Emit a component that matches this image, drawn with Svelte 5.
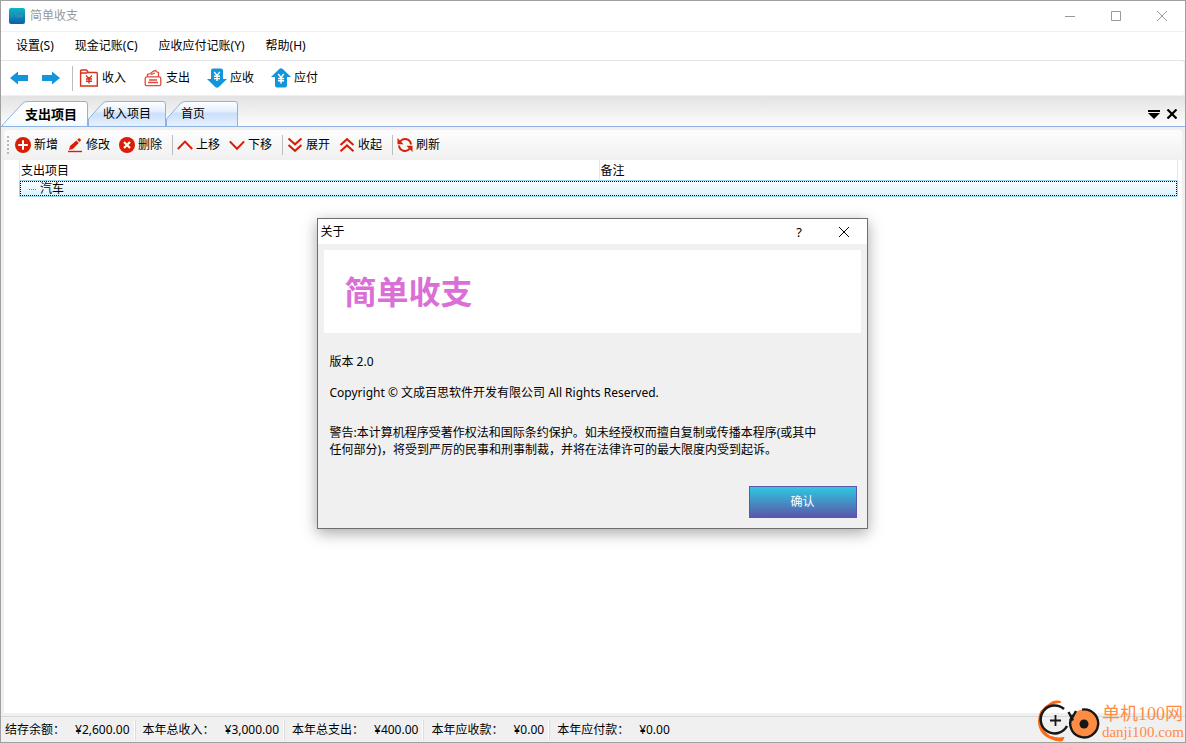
<script>
  const menus = ['设置(S)', '现金记账(C)', '应收应付记账(Y)', '帮助(H)'];

  const entries = [
    { icon: 'income', text: '收入' },
    { icon: 'expense', text: '支出' },
    { icon: 'receivable', text: '应收' },
    { icon: 'payable', text: '应付' },
  ];

  const tabs = [
    { text: '支出项目', width: 86, slant: 24 },
    { text: '收入项目', width: 78, slant: 18 },
    { text: '首页', width: 72, slant: 18 },
  ];

  const groups = [
    [
      { icon: 'add', text: '新增' },
      { icon: 'edit', text: '修改' },
      { icon: 'remove', text: '删除' },
    ],
    [
      { icon: 'up', text: '上移' },
      { icon: 'down', text: '下移' },
    ],
    [
      { icon: 'expand', text: '展开' },
      { icon: 'collapse', text: '收起' },
    ],
    [{ icon: 'refresh', text: '刷新' }],
  ];

  const totals = [
    { label: '结存余额：', value: '¥2,600.00' },
    { label: '本年总收入：', value: '¥3,000.00' },
    { label: '本年总支出：', value: '¥400.00' },
    { label: '本年应收款：', value: '¥0.00' },
    { label: '本年应付款：', value: '¥0.00' },
  ];

  let activeTab = $state(0);
  let aboutOpen = $state(true);

  // slanted left side, rounded top right corner
  const tabPath = (w, s) =>
    `M.5 25 V${s > 20 ? 24 : 18} L${s - 4} 3 Q${s - 2} .5 ${s + 2} .5 H${w - 3} Q${w - 0.5} .5 ${w - 0.5} 3 V25`;
</script>

{#snippet toolIcon(name)}
  <svg class="tool-icon" viewBox="0 0 16 16" aria-hidden="true">
    {#if name === 'add'}
      <circle cx="8" cy="8" r="8" fill="#d81e06" />
      <path d="M8 3.2v9.6M3.2 8h9.6" stroke="#fff" stroke-width="2" />
    {:else if name === 'edit'}
      <path d="M2 13l1-4 6.400-5.600 2.400 2.600-6 6zM10.200 2.800l1.300-1.200q.8-.6 1.600.2l.6.600q.6.800 0 1.400l-1.300 1.200z" fill="#d81e06" />
      <path d="M1 14.500h14" stroke="#d81e06" stroke-width="1.400" />
    {:else if name === 'remove'}
      <circle cx="8" cy="8" r="8" fill="#d81e06" />
      <path d="M5 5l6 6M11 5l-6 6" stroke="#fff" stroke-width="2.200" />
    {:else if name === 'up'}
      <path d="M.8 12L8 4.600l7.200 7.400" class="line" />
    {:else if name === 'down'}
      <path d="M.8 4.400L8 11.800l7.200-7.400" class="line" />
    {:else if name === 'expand'}
      <path d="M1.500 1.500L8 7.300l6.500-5.800M1.500 8L8 13.800 14.500 8" class="line" />
    {:else if name === 'collapse'}
      <path d="M1.500 8L8 2.200 14.500 8M1.500 14.200L8 8.400l6.500 5.800" class="line" />
    {:else if name === 'refresh'}
      <path d="M3.200 4.500A6 6 0 0 1 14 7.500M12.800 11.500A6 6 0 0 1 2 8.500" class="line" />
      <path d="M.5 1v6.200h6zM15.500 15V8.800h-6z" fill="#d81e06" />
    {/if}
  </svg>
{/snippet}

{#snippet entryIcon(name)}
  <svg class="entry-icon" viewBox="0 0 20 20" aria-hidden="true">
    {#if name === 'income'}
      <path d="M1.600 18V3q0-1 1-1h4.800l2 2.500h7.900q1 0 1 1V18zM1.600 5h7" fill="none" stroke="#d9301c" stroke-width="1.400" />
      <path d="M7 7.500l3 3 3-3M10 10.500V15.500M7 11h6M7 13.200h6" fill="none" stroke="#d9301c" stroke-width="1.400" />
    {:else if name === 'expense'}
      <path d="M3.800 8.800h12.400q1.600 0 1.600 1.600v5.700q0 1.600-1.600 1.600H3.800q-1.600 0-1.600-1.600v-5.700q0-1.600 1.600-1.600zM4.500 8.500V6.500l3-1 3-2.500 2-.5 1.500 1.500 1.500.5v4M8 6.500l4-1.500M6 12h8M5 14.500h10" fill="none" stroke="#e04a3a" stroke-width="1.300" />
    {:else if name === 'receivable'}
      <path d="M6 .5h8q2 0 2 2V11h4l-8.200 8q-1.800 1.400-3.600 0L0 11h4V2.500q0-2 2-2z" fill="#1296db" />
      <path d="M7.200 4L10 7.500 12.800 4M10 7.500V13M7 8.300h6M7 10.600h6" fill="none" stroke="#fff" stroke-width="1.400" />
    {:else}
      <path d="M6 19.500h8q2 0 2-2V9h4l-8.200-8Q10 -.4 8.200 1L0 9h4v8.500q0 2 2 2z" fill="#1296db" />
      <path d="M7.200 6L10 9.500 12.800 6M10 9.500V15.500M7 10.500h6M7 12.800h6" fill="none" stroke="#fff" stroke-width="1.400" />
    {/if}
  </svg>
{/snippet}

<div class="window">
  <header class="title-bar">
    <svg class="app-icon" viewBox="0 0 16 16" aria-hidden="true">
      <defs>
        <linearGradient id="app-fill" x1="0" y1="0" x2="0" y2="1">
          <stop offset="0" stop-color="#13b5c4" />
          <stop offset="1" stop-color="#0c5fa8" />
        </linearGradient>
      </defs>
      <rect width="16" height="16" rx="2" fill="url(#app-fill)" />
      <path d="M3 6v4M5 6h2v4M9.500 6v4M11 8h3M12 6v4" fill="none" stroke="#3f9fc4" stroke-width="1" opacity=".7" />
    </svg>
    <span class="title">简单收支</span>
    <button class="control" aria-label="最小化">
      <svg viewBox="0 0 12 12"><path d="M1 6.500h10" /></svg>
    </button>
    <button class="control" aria-label="最大化">
      <svg viewBox="0 0 12 12"><path d="M1.500 1.500h9v9h-9z" /></svg>
    </button>
    <button class="control" aria-label="关闭">
      <svg viewBox="0 0 12 12"><path d="M1 1l10 10M11 1L1 11" /></svg>
    </button>
  </header>

  <nav class="menu-bar">
    {#each menus as menu}
      <button>{menu}</button>
    {/each}
  </nav>

  <div class="main-tools">
    <button class="arrow" aria-label="后退">
      <svg viewBox="0 0 18 14"><path d="M0 7l8-6.500V4h10v6H8v3.500z" fill="#1296db" /></svg>
    </button>
    <button class="arrow" aria-label="前进">
      <svg viewBox="0 0 18 14"><path d="M18 7l-8-6.500V4H0v6h10v3.500z" fill="#1296db" /></svg>
    </button>
    <span class="divider"></span>
    {#each entries as entry}
      <button class="entry">
        {@render entryIcon(entry.icon)}
        {entry.text}
      </button>
    {/each}
  </div>

  <div class="tab-bar">
    <svg width="0" height="0" class="defs" aria-hidden="true">
      <defs>
        <linearGradient id="tab-on" x1="0" y1="0" x2="0" y2="1">
          <stop offset="0" stop-color="#fff" />
          <stop offset="1" stop-color="#f5fbfd" />
        </linearGradient>
        <linearGradient id="tab-off" x1="0" y1="0" x2="0" y2="1">
          <stop offset="0" stop-color="#fff" />
          <stop offset=".4" stop-color="#e4effd" />
          <stop offset=".5" stop-color="#c9dffb" />
          <stop offset="1" stop-color="#e8f2fe" />
        </linearGradient>
      </defs>
    </svg>
    <div class="tabs" role="tablist">
      {#each tabs as tab, i}
        <button
          class="tab"
          class:active={i === activeTab}
          role="tab"
          aria-selected={i === activeTab}
          style="width: {tab.width}px"
          onclick={() => (activeTab = i)}
        >
          <svg class="tab-shape" viewBox="0 0 {tab.width} 25" aria-hidden="true">
            <path
              d={tabPath(tab.width, tab.slant)}
              fill={i === activeTab ? 'url(#tab-on)' : 'url(#tab-off)'}
              stroke="#8db2e3"
            />
          </svg>
          <span>{tab.text}</span>
        </button>
      {/each}
    </div>
    <button class="tab-action" aria-label="标签列表">
      <svg viewBox="0 0 12 10"><path d="M0 1h12v2H0zM0 4h12L6 10z" /></svg>
    </button>
    <button class="tab-action" aria-label="关闭标签">
      <svg viewBox="0 0 12 10"><path d="M1.500 .5l9 9M10.500 .5l-9 9" stroke="#000" stroke-width="2.200" /></svg>
    </button>
  </div>

  <main class="page">
    <div class="page-tools">
      <span class="grip"></span>
      {#each groups as group, i}
        {#if i > 0}
          <span class="separator"></span>
        {/if}
        <div class="group">
          {#each group as tool}
            <button class="tool">
              {@render toolIcon(tool.icon)}
              {tool.text}
            </button>
          {/each}
        </div>
      {/each}
    </div>

    <div class="grid">
      <table>
        <thead>
          <tr><th>支出项目</th><th>备注</th></tr>
        </thead>
        <tbody>
          <tr class="selected"><td><span class="branch"></span>汽车</td><td></td></tr>
        </tbody>
      </table>
    </div>
  </main>

  <footer class="status-bar">
    {#each totals as total}
      <div class="total">
        <span>{total.label}</span>
        <span>{total.value}</span>
      </div>
    {/each}
  </footer>

  <div class="site-mark">
    <svg viewBox="0 0 64 44" aria-hidden="true">
      <path d="M25 2.500Q20 0 14 4 2 10 2 22q0 14 15 19 6 2 9.500 1l2-4q-7 2-14-1Q5 31 5 22 5 12 14 6q5-3 11-2z" fill="#ff6a13" />
      <path d="M25 3.500Q20 0 14 4l-3 4q7-4 14-4.500zM16 40q5 3 10.500 2l2-4q-7 2-13-1z" fill="#ff6a13" />
      <path d="M28 10A14 14 0 1 0 31 27" fill="none" stroke="#171717" stroke-width="2.500" />
      <path d="M19.500 16v11M14 21.500h11" stroke="#171717" stroke-width="1.800" />
      <circle cx="48" cy="24.500" r="14" fill="#ff8c45" />
      <path d="M46 10.600A14 14 0 1 1 37 16M32.500 13l4.500 8.500M40 12l-5 9" fill="none" stroke="#171717" stroke-width="2.400" />
      <circle cx="48" cy="25" r="4.500" fill="#171717" />
    </svg>
    <div>
      <span class="site-name">单机100网</span>
      <span class="site-url">danji100.com</span>
    </div>
  </div>

  {#if aboutOpen}
    <div class="overlay">
      <div class="dialog" role="dialog" aria-labelledby="about-title">
        <div class="dialog-bar">
          <span id="about-title">关于</span>
          <button class="help" aria-label="帮助">?</button>
          <button class="close" aria-label="关闭对话框" onclick={() => (aboutOpen = false)}>
            <svg viewBox="0 0 12 12"><path d="M1 1l10 10M11 1L1 11" /></svg>
          </button>
        </div>
        <h1>简单收支</h1>
        <div class="about">
          <p>版本 2.0</p>
          <p>Copyright © 文成百思软件开发有限公司 All Rights Reserved.</p>
          <p class="warning">
            警告:本计算机程序受著作权法和国际条约保护。如未经授权而擅自复制或传播本程序(或其中<br />任何部分)，将受到严厉的民事和刑事制裁，并将在法律许可的最大限度内受到起诉。
          </p>
        </div>
        <button class="confirm" onclick={() => (aboutOpen = false)}>确认</button>
      </div>
    </div>
  {/if}
</div>

<style>
  :global(body) {
    margin: 0;
  }
  .window {
    background: #f0f0f0;
    border: 1px solid #a0a0a0;
    box-sizing: border-box;
    color: #000;
    display: flex;
    flex-direction: column;
    font-family: 'Noto Sans', 'Noto Sans CJK SC', sans-serif;
    font-size: 12px;
    line-height: 16px;
    min-height: 100vh;
    position: relative;
    white-space: nowrap;
  }
  button {
    align-items: center;
    background: none;
    border: 0;
    color: inherit;
    display: flex;
    font: inherit;
    padding: 0;
  }
  svg {
    display: block;
    flex: none;
  }

  .title-bar {
    align-items: center;
    background: #fff;
    border-bottom: 1px solid #f0f0f0;
    display: flex;
    height: 30px;
  }
  .app-icon {
    height: 16px;
    margin: 0 5px 0 8px;
    width: 16px;
  }
  .title {
    color: #999;
    flex: 1;
  }
  .control {
    height: 30px;
    justify-content: center;
    width: 46px;
  }
  .control svg,
  .close svg {
    fill: none;
    height: 12px;
    stroke: #999;
    width: 12px;
  }

  .menu-bar {
    background: #fff;
    border-bottom: 1px solid #e5e5e5;
    display: flex;
    gap: 1px;
    height: 28px;
    padding-left: 5px;
  }
  .menu-bar button {
    padding: 0 10px;
  }

  .main-tools {
    align-items: center;
    background: #fff;
    border-radius: 0 3px 3px 0;
    display: flex;
    height: 34px;
    line-height: 18px;
    margin-right: 1px;
    padding-left: 9px;
  }
  .arrow {
    margin-right: 14px;
  }
  .arrow svg {
    height: 14px;
    width: 18px;
  }
  .divider {
    background: #bdbdbd;
    height: 25px;
    margin: 0 6px 0 -2px;
    width: 1px;
  }
  .entry {
    gap: 3px;
    margin-right: 17px;
  }
  .entry-icon {
    height: 20px;
    width: 20px;
  }

  .tab-bar {
    align-items: center;
    background: linear-gradient(#e3e3e3, #fcfcfc);
    border-bottom: 1px solid #8db2e3;
    border-top: 1px solid #f0f0f0;
    display: flex;
    height: 30px;
    padding-right: 7px;
  }
  .defs {
    position: absolute;
  }
  .tabs {
    align-self: flex-end;
    display: flex;
    flex: 1;
    padding-left: 1px;
  }
  .tab {
    height: 25px;
    justify-content: flex-start;
    padding-left: 15px;
    padding-top: 1px;
    position: relative;
  }
  .tab span {
    position: relative;
  }
  .tab.active {
    font-size: 13px;
    font-weight: bold;
    height: 26px;
    margin-bottom: -1px;
    padding-left: 23px;
    padding-top: 0;
  }
  .tab-shape {
    height: 25px;
    left: 0;
    overflow: visible;
    position: absolute;
    top: 0;
    width: 100%;
  }
  .tab-action {
    margin-left: 6px;
    padding-top: 6px;
  }
  .tab-action svg {
    height: 10px;
    width: 12px;
  }

  .page {
    display: flex;
    flex: 1;
    flex-direction: column;
    padding: 3px;
  }
  .page-tools {
    align-items: center;
    background: linear-gradient(#fdfdfd, #f0f0f0);
    border-radius: 3px;
    display: flex;
    height: 30px;
    padding-left: 3px;
  }
  .grip {
    background: repeating-linear-gradient(#b8b8b8 0 2px, transparent 2px 4px);
    height: 18px;
    margin-right: 6px;
    width: 2px;
  }
  .group {
    display: flex;
    gap: 9px;
  }
  .tool {
    gap: 3px;
  }
  .tool-icon {
    height: 16px;
    width: 16px;
  }
  .line {
    fill: none;
    stroke: #d81e06;
    stroke-width: 2;
  }
  .separator {
    background: #bdbdbd;
    height: 20px;
    margin: 0 4px 0 10px;
    width: 1px;
  }

  .grid {
    background: #fff;
    flex: 1;
    padding: 0 4px 0 15px;
  }
  table {
    border-collapse: separate;
    border-spacing: 0;
    table-layout: fixed;
    width: 100%;
  }
  th {
    border-left: 1px solid #e5e5e5;
    font-weight: normal;
    height: 18px;
    padding: 2px 1px 0;
    text-align: left;
  }
  th:last-child {
    border-right: 1px solid #e5e5e5;
  }
  td {
    background: linear-gradient(#fafdff, #d9f1fc);
    border-bottom: 1px solid #99d6f0;
    border-top: 1px solid #99d6f0;
    height: 15px;
    line-height: 15px;
    padding: 0;
  }
  td:first-child {
    border-left: 1px solid #99d6f0;
    border-radius: 2px 0 0 2px;
  }
  td:last-child {
    border-radius: 0 2px 2px 0;
    border-right: 1px solid #99d6f0;
  }
  .selected {
    outline: 1px dotted #000;
    outline-offset: -2px;
  }
  .branch {
    border-top: 1px dotted #808080;
    display: inline-block;
    margin: 0 4px 0 9px;
    vertical-align: middle;
    width: 7px;
  }

  .status-bar {
    align-items: center;
    border-top: 1px solid #d7d7d7;
    display: flex;
    height: 25px;
  }
  .total {
    border-right: 1px solid #fff;
    box-shadow: 1px 0 #dcdcdc;
    display: flex;
    gap: 10px;
    line-height: 20px;
    padding: 0 4px 0 8px;
  }
  .total:first-child {
    padding-left: 4px;
  }
  .total:last-child {
    border-right: 0;
    box-shadow: none;
  }

  .site-mark {
    bottom: -1px;
    display: flex;
    position: absolute;
    right: 1px;
  }
  .site-mark svg {
    height: 44px;
    width: 64px;
  }
  .site-mark div {
    color: #ff8c45;
    display: flex;
    flex-direction: column;
    font-family: 'Liberation Serif', 'Noto Sans CJK SC', serif;
    padding: 5px 0 0 2px;
  }
  .site-name {
    font-size: 18px;
    line-height: 20px;
  }
  .site-url {
    font-size: 15px;
    line-height: 17px;
  }

  .overlay {
    display: grid;
    inset: 0;
    padding: 4px 2px 0 0;
    place-items: center;
    position: absolute;
  }
  .dialog {
    background: #f0f0f0;
    border: 1px solid #6e6e6e;
    box-shadow: 0 4px 14px rgba(0, 0, 0, 0.35);
    display: flex;
    flex-direction: column;
    width: 549px;
  }
  .dialog-bar {
    align-items: center;
    background: #fff;
    display: flex;
    height: 25px;
    padding-left: 3px;
  }
  .dialog-bar span {
    flex: 1;
  }
  .dialog-bar button {
    height: 25px;
    justify-content: center;
    width: 45px;
  }
  .help {
    font-size: 13px;
  }
  .close svg {
    stroke: #000;
  }
  h1 {
    background: #fff;
    color: #da70d6;
    font-size: 32px;
    line-height: 83px;
    margin: 6px 6px 20px;
    padding-left: 21px;
  }
  .about {
    padding: 0 12px;
  }
  p {
    line-height: 17px;
    margin: 0 0 14px;
  }
  .warning {
    margin: 23px 0 28px;
  }
  .confirm {
    align-self: flex-end;
    background: linear-gradient(#2fc8e0, #5b57ab);
    border: 1px solid #5b57ab;
    color: #fff;
    height: 32px;
    justify-content: center;
    margin: 0 10px 10px;
    width: 108px;
  }
</style>
